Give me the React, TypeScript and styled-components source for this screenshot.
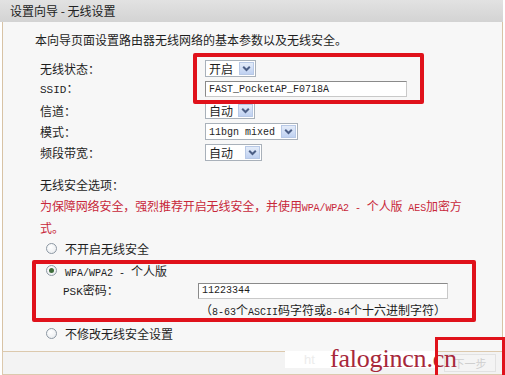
import React from "react";
import styled, { createGlobalStyle } from "styled-components";

const GlobalStyle = createGlobalStyle`
	body {
		margin: 0;
		background: #ffffff;
		font-family: "Noto Sans CJK SC", "Liberation Sans", sans-serif;
		font-size: 12px;
		color: #1e1e1e;
		overflow: hidden;
	}
`;

const Frame = styled.div`
	position: relative;
	width: 501px;
	margin-left: 2px;
`;

const Header = styled.div`
	height: 22px;
	margin-left: -2px;
	padding-left: 10px;
	display: flex;
	align-items: center;
	background: linear-gradient(#e2e2e2, #d3d3d3);
	color: #222;
	line-height: 22px;
`;

const Panel = styled.div`
	box-sizing: border-box;
	border-left: 1px solid #d8c3a5;
	border-right: 1px solid #d8c3a5;
	background: #f7f7f7;
	padding: 8px 0 7px 37px;
`;

const Intro = styled.div`
	height: 20px;
	line-height: 20px;
	margin-left: -5px;
`;

// red annotation frame drawn over a group of rows
const Marked = styled.div<{ $top: number; $left: number; $w: number; $h: number }>`
	position: relative;
	&::after {
		content: "";
		position: absolute;
		top: ${(p) => p.$top}px;
		left: ${(p) => p.$left}px;
		width: ${(p) => p.$w}px;
		height: ${(p) => p.$h}px;
		box-sizing: border-box;
		border: 4px solid #e0121b;
		border-radius: 2px;
		pointer-events: none;
	}
`;

const Fields = styled.div`
	margin-top: 7.5px;
`;

const FieldRow = styled.div`
	display: flex;
	align-items: center;
	height: 21px;
`;

const Label = styled.span<{ $w?: number }>`
	width: ${(p) => p.$w ?? 165}px;
	flex: none;
	line-height: 21px;
`;

const Mono = styled.span<{ $size?: number }>`
	font-family: "Liberation Mono", monospace;
	font-size: ${(p) => p.$size ?? 10}px;
`;

const Select = styled.div<{ $w: number }>`
	box-sizing: border-box;
	display: flex;
	align-items: center;
	justify-content: space-between;
	width: ${(p) => p.$w}px;
	height: 17px;
	padding: 0 1px 0 3px;
	border: 1px solid #a9b1ba;
	background: #fff;
	line-height: 15px;
`;

const Arrow = styled.span`
	box-sizing: border-box;
	display: flex;
	align-items: center;
	justify-content: center;
	width: 15px;
	height: 13px;
	border: 1px solid #b8c9e6;
	background: linear-gradient(#e4ecf9, #bfd1f1);
`;

const TextBox = styled.div<{ $w: number }>`
	box-sizing: border-box;
	display: flex;
	align-items: center;
	width: ${(p) => p.$w}px;
	height: 16px;
	padding-left: 3px;
	border: 1px solid #8a8a8a;
	border-right-color: #c9c9c9;
	border-bottom-color: #c9c9c9;
	background: #fff;
`;

const SectionTitle = styled.div`
	margin-top: 12.5px;
	line-height: 20px;
`;

const Warning = styled.div`
	color: #c8283a;
	line-height: 19px;
	margin-top: 1px;
	letter-spacing: -0.1px;
`;

const RadioRow = styled.div`
	display: flex;
	align-items: center;
	gap: 8px;
	height: 22px;
	padding-left: 6px;
`;

const Radio = styled.span<{ $on?: boolean }>`
	box-sizing: border-box;
	display: flex;
	align-items: center;
	justify-content: center;
	width: 11px;
	height: 11px;
	border-radius: 50%;
	border: 1px solid #8d98a3;
	background: radial-gradient(circle at 40% 35%, #ffffff, #e6e9ec);
	&::after {
		content: "";
		display: ${(p) => (p.$on ? "block" : "none")};
		width: 5px;
		height: 5px;
		border-radius: 50%;
		background: #3f6d3c;
	}
`;

const PskRow = styled.div`
	display: flex;
	align-items: center;
	height: 19px;
	padding-left: 23px;
`;

const Hint = styled.div`
	height: 19px;
	line-height: 19px;
	padding-left: 160px;
`;

const LastRadio = styled(RadioRow)`
	margin-top: 3px;
`;

const Footer = styled.div`
	box-sizing: border-box;
	display: flex;
	align-items: center;
	justify-content: flex-end;
	height: 24px;
	padding-right: 6px;
	border: 1px solid #dcc9ad;
	background: #f3f3f3;
`;

const NextButton = styled.div`
	box-sizing: border-box;
	width: 52px;
	height: 18px;
	display: flex;
	align-items: center;
	justify-content: center;
	border: 1px solid #e2e2e2;
	background: #f4f4f4;
	color: #cfcfcf;
	font-size: 11px;
`;

const Stamp = styled.div`
	position: absolute;
	left: 283px;
	top: 351px;
	width: 152px;
	height: 17px;
	padding-left: 19px;
	box-sizing: border-box;
	background: #fff;
	color: #ececec;
	line-height: 17px;
	font-family: "Liberation Sans", sans-serif;
	font-size: 13px;
`;

const Watermark = styled.div`
	position: absolute;
	left: 328px;
	top: 346px;
	font-family: "Liberation Serif", serif;
	font-size: 26px;
	line-height: 1;
	color: #a7283a;
	letter-spacing: -0.2px;
`;

const CornerMark = styled.div`
	position: absolute;
	left: 433px;
	top: 337px;
	width: 70px;
	height: 50px;
	box-sizing: border-box;
	border: 3px solid #e0121b;
	border-bottom: none;
`;

function Chevron() {
	return (
		<svg width="9" height="7" viewBox="0 0 9 7">
			<path d="M1.2 1.8 L4.5 5 L7.8 1.8" fill="none" stroke="#4c5f86" strokeWidth="2" />
		</svg>
	);
}

function Dropdown({ width, children }: { width: number; children: React.ReactNode }) {
	return (
		<Select $w={width}>
			<span>{children}</span>
			<Arrow>
				<Chevron />
			</Arrow>
		</Select>
	);
}

export default function App() {
	return (
		<>
			<GlobalStyle />
			<Frame>
				<Header>设置向导 - 无线设置</Header>
				<Panel>
					<Intro>本向导页面设置路由器无线网络的基本参数以及无线安全。</Intro>
					<Fields>
						<Marked $top={-5} $left={153} $w={231} $h={51}>
							<FieldRow>
								<Label>无线状态：</Label>
								<Dropdown width={51}>开启</Dropdown>
							</FieldRow>
							<FieldRow>
								<Label>
									<Mono $size={11}>SSID</Mono>：
								</Label>
								<TextBox $w={202}>
									<Mono>FAST_PocketAP_F0718A</Mono>
								</TextBox>
							</FieldRow>
						</Marked>
						<FieldRow>
							<Label>信道：</Label>
							<Dropdown width={50}>自动</Dropdown>
						</FieldRow>
						<FieldRow>
							<Label>模式：</Label>
							<Dropdown width={93}>
								<Mono>11bgn mixed</Mono>
							</Dropdown>
						</FieldRow>
						<FieldRow>
							<Label>频段带宽：</Label>
							<Dropdown width={57}>自动</Dropdown>
						</FieldRow>
					</Fields>
					<SectionTitle>无线安全选项：</SectionTitle>
					<Warning>
						为保障网络安全，强烈推荐开启无线安全，并使用<Mono>WPA/WPA2 - </Mono>个人版
						<Mono> AES</Mono>加密方
						<br />
						式。
					</Warning>
					<RadioRow>
						<Radio />
						<span>不开启无线安全</span>
					</RadioRow>
					<Marked $top={1} $left={-8} $w={444} $h={62}>
						<RadioRow>
							<Radio $on />
							<span>
								<Mono>WPA/WPA2 - </Mono>个人版
							</span>
						</RadioRow>
						<PskRow>
							<Label $w={135}>
								<Mono $size={11}>PSK</Mono>密码：
							</Label>
							<TextBox $w={250}>
								<Mono>11223344</Mono>
							</TextBox>
						</PskRow>
						<Hint>
							（<Mono>8-63</Mono>个<Mono>ASCII</Mono>码字符或<Mono>8-64</Mono>个十六进制字符）
						</Hint>
					</Marked>
					<LastRadio>
						<Radio />
						<span>不修改无线安全设置</span>
					</LastRadio>
				</Panel>
				<Footer>
					<NextButton>下一步</NextButton>
				</Footer>
				<Stamp>ht</Stamp>
				<Watermark>falogincn.cn</Watermark>
				<CornerMark />
			</Frame>
		</>
	);
}
